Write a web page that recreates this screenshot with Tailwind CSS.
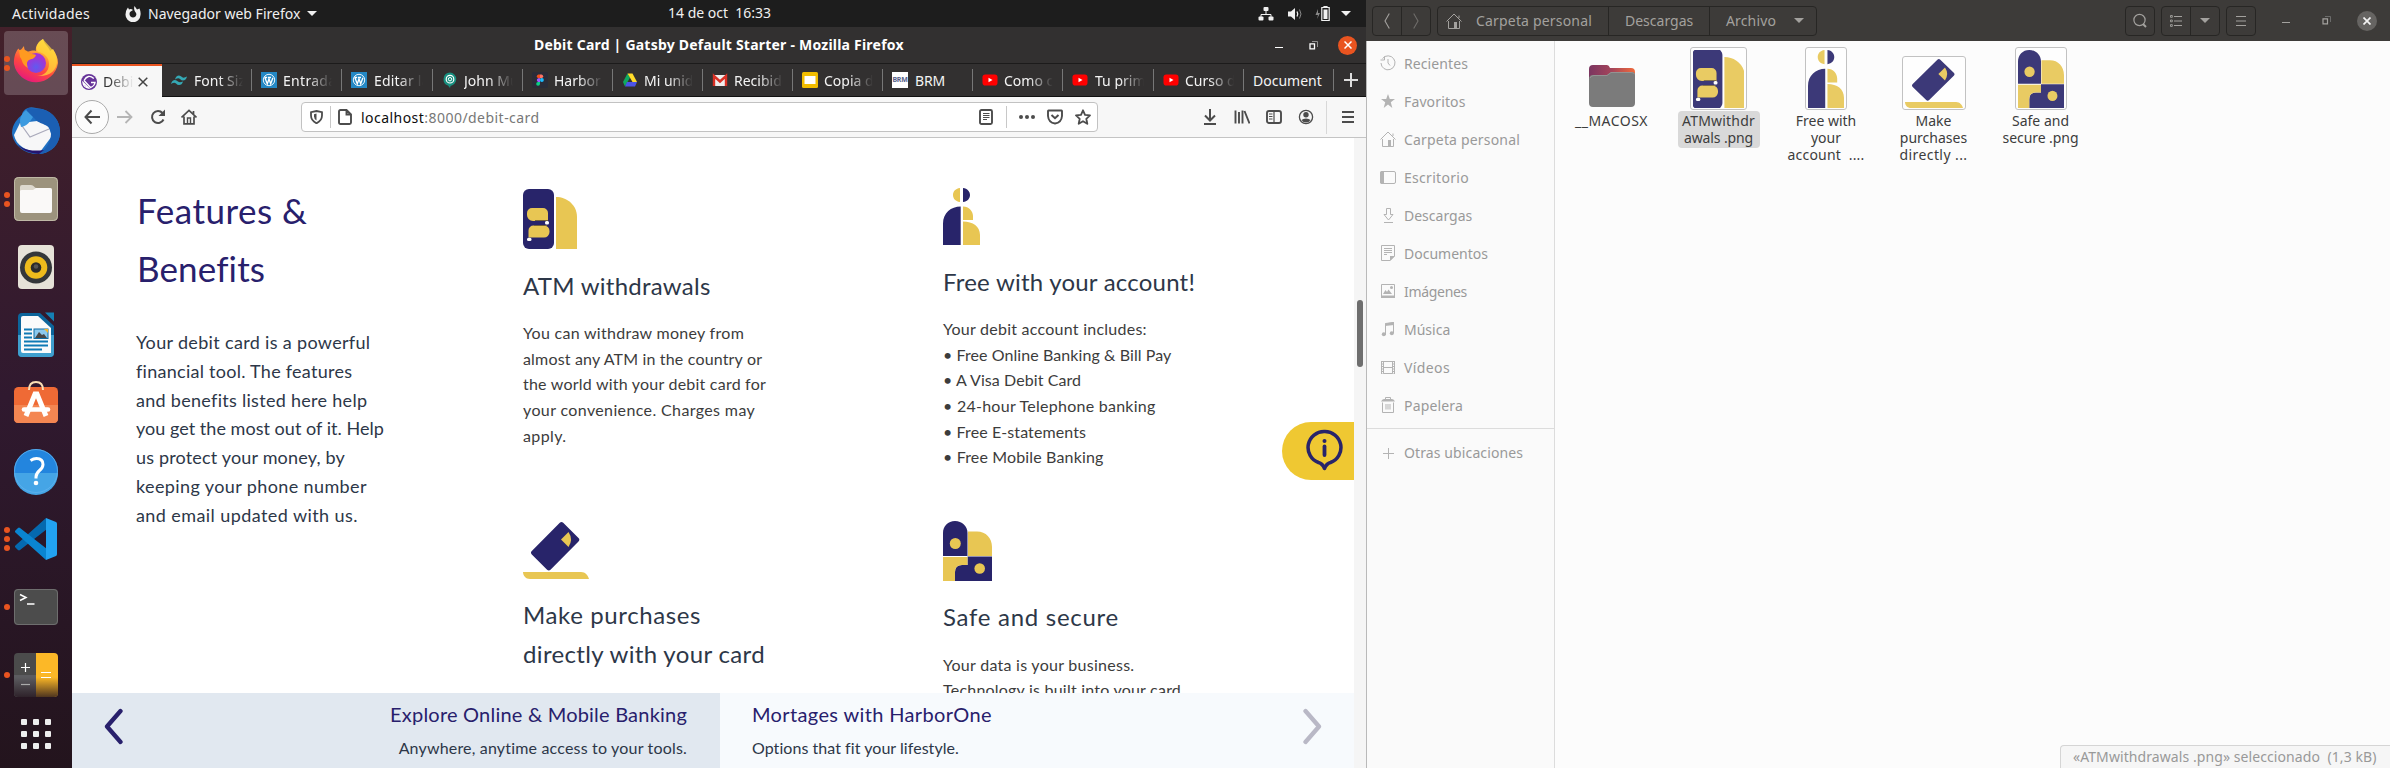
<!DOCTYPE html>
<html lang="es">
<head>
<meta charset="utf-8">
<title>Debit Card</title>
<script src="https://cdn.jsdelivr.net/npm/@tailwindcss/browser@4"></script>
</head>
<body class="bg-white">
<!-- Shared artwork for page features and file thumbnails -->
<svg width="0" height="0" class="absolute">
  <symbol id="atm" viewBox="0 0 54 60" preserveAspectRatio="none"><rect width="31" height="60" rx="6" fill="#28246a"/><path d="M33 8C44 8 54 16 54 28V60H33Z" fill="#e8c653"/><path d="M9 19h11a5 5 0 0 1 5 5v8H10a6 6 0 0 1-6-6v-2a5 5 0 0 1 5-5ZM10.500 36.500H21a5.500 5.500 0 0 1 5.500 5.500v1a5.500 5.500 0 0 1-5.500 5.500H5.500v-7a5 5 0 0 1 5-5Z" fill="#e8c653"/><path d="M12 31.500h13M11 36.500h13" stroke="#746238" stroke-width="1.200"/><rect x="22" y="32" width="4" height="3.400" rx="1.500" fill="#fff"/><rect x="4" y="48.700" width="4.500" height="3.300" rx="1.500" fill="#fff"/></symbol>
  <symbol id="person" viewBox="0 0 37 57" preserveAspectRatio="none"><path d="M17 0v14C12 13.500 10 10 10 7s2-6.500 7-7ZM20 18.500c6 0 10 5 10 9.500v4H20ZM20 33.500c10 0 17 5 17 13.500v10H20Z" fill="#e8c653"/><path d="M20 0c4.500.5 7 3.500 7 7s-2.500 6.500-7 7ZM17.700 18.500V57H0V35.500C0 25 8 18.500 17.700 18.500Z" fill="#28246a"/></symbol>
  <symbol id="card" viewBox="0 0 66 57" preserveAspectRatio="none"><path d="M36.800.8q1.700-1.600 3.400 0L55.500 16q1.700 1.700 0 3.400L27.500 47.700q-1.700 1.600-3.400 0L8.800 32.500q-1.700-1.700 0-3.400Z" fill="#28246a"/><path d="m45.500 10-7.500 7.500 7.500 7.500q5-7.500 0-15Z" fill="#e8c653"/><path d="M0 50h58c4.500 0 7 3.500 8 7H7c-4.500 0-7-3.500-7-7Z" fill="#e8c653"/></symbol>
  <symbol id="safe" viewBox="0 0 49 60" preserveAspectRatio="none"><path d="M0 35V12C0 5 5 0 12 0s12.500 5 12.500 12v23ZM24.500 35.500H49V60H12V51q0-7 7-7h5.500Z" fill="#28246a"/><path d="M25 10.500h9C43 10.500 49 17 49 26v9H25ZM0 36h24.500v8H19q-7 0-7 7v9H0Z" fill="#e8c653"/><circle cx="12.300" cy="22.500" r="5.500" fill="#e8c653"/><circle cx="36.700" cy="47.500" r="5.300" fill="#e8c653"/></symbol>
  <symbol id="home" viewBox="0 0 16 16"><path d="M.5 8.500 8 1l7.500 7.500M2.500 8v7.500h11V8M13 5V2.500" fill="none" stroke="currentColor"/><rect x="8" y="9" width="3" height="6.500" fill="currentColor"/></symbol>
  <symbol id="wp" viewBox="0 0 16 16"><rect width="16" height="16" fill="#2488c4"/><circle cx="8" cy="8" r="5.700" fill="none" stroke="#fff" stroke-width=".9"/><path d="m3.800 5.500 2.500 6.300L8 7l1.700 4.800 2.200-6M3.400 5.500h2.800M7 5.500h3" fill="none" stroke="#fff" stroke-width="1.300"/></symbol>
  <symbol id="yt" viewBox="0 0 16 16"><rect x=".5" y="2.500" width="15" height="11" rx="2.800" fill="#f00"/><path d="M6.500 5.700v4.600L10.500 8Z" fill="#fff"/></symbol>
</svg>

<div class="flex w-[2390px] h-[768px] overflow-hidden text-[14px] leading-[17px] font-['Noto_Sans',sans-serif] whitespace-nowrap">

<!-- Left monitor -->
<div class="w-[1366px] h-full flex flex-col">
  <header class="h-[27px] bg-[#1d1d1d] text-[#f0f0f0] flex items-center relative shrink-0">
    <span class="pl-3 w-[125px] tracking-[.3px]">Actividades</span>
    <svg class="w-4 h-4" viewBox="0 0 16 16"><path d="M9.500 0 12 3.500 14.500 2.500Q16 6 15.500 9A7.500 7.500 0 0 1 .5 8.500Q.5 5 2 3L3 1.500 4 3.500Q6 2.500 8 4L5 6Q3.800 8.500 5.500 10.500 8 12.500 10.500 10.500 12.500 8 10 5.500 8.500 3 9.500 0Z" fill="#f0f0f0"/></svg>
    <span class="ml-[7px] w-[159px]">Navegador web Firefox</span>
    <span class="border-x-[5px] border-x-transparent border-t-[5px] border-t-[#f0f0f0]"></span>
    <span class="absolute left-[668px] top-[4px] whitespace-pre">14 de oct  16:33</span>
    <div class="ml-auto pr-[15px] flex items-center text-[#f0f0f0]">
      <svg class="w-4 h-4 mr-[13px]" viewBox="0 0 16 16"><path d="M8 5v4M3 12V8.500h10V12" fill="none" stroke="currentColor"/><rect x="5.500" y="1" width="5" height="4" rx="1" fill="currentColor"/><rect x=".5" y="10.500" width="5" height="4" rx="1" fill="currentColor"/><rect x="10.500" y="10.500" width="5" height="4" rx="1" fill="currentColor"/></svg>
      <svg class="w-4 h-4 mr-[12px]" viewBox="0 0 16 16"><path d="M1 5.500h3L8 2v12L4 10.500H1Z" fill="currentColor"/><path d="M10 5.500q1.500 2.500 0 5" fill="none" stroke="currentColor" stroke-width="1.300"/><path d="M12.500 3.500q3 4.500 0 9" fill="none" stroke="#888"/></svg>
      <svg class="w-4 h-4 mr-[10px]" viewBox="0 0 16 16"><path d="m3 3-2.500 6H3L2 13l3-6H3Z" fill="#888"/><path d="M9 1.500V.5h3v1M6.800 1.500h7.400v13H6.800Z" fill="none" stroke="currentColor" stroke-width="1.200"/><rect x="8.500" y="3.500" width="4" height="9.500" fill="currentColor"/></svg>
      <span class="border-x-[5px] border-x-transparent border-t-[5px] border-t-[#f0f0f0]"></span>
    </div>
  </header>

  <div class="flex flex-1 min-h-0">
    <!-- Dock -->
    <nav class="w-[72px] shrink-0 pt-[2px] bg-linear-to-b from-[#43202a] via-[#30192f] to-[#23141d] text-[#e95420]">
      <div class="relative h-[68px] flex items-center justify-center">
        <div class="absolute left-1 top-[2px] size-16 rounded bg-white/20"></div>
        <div class="absolute left-[4px] flex flex-col gap-[3px]"><i class="size-[6px] rounded-full bg-current"></i><i class="size-[6px] rounded-full bg-current"></i></div>
        <svg class="relative w-12 h-12" viewBox="0 0 48 48"><defs><linearGradient id="ff" x1=".8" y1="0" x2=".3" y2="1"><stop offset="0" stop-color="#fff44f"/><stop offset=".35" stop-color="#ffa436"/><stop offset=".65" stop-color="#ff4a3d"/><stop offset="1" stop-color="#e5177f"/></linearGradient><radialGradient id="fg" cx=".5" cy=".7"><stop offset="0" stop-color="#5f5bf0"/><stop offset="1" stop-color="#a234d6"/></radialGradient></defs><path d="M31 0c1 5 6 8 7 12l3-2c3 5 5 9 5 14A22.300 22.300 0 0 1 2 25C1.500 18 4 12 6.500 9.500L8 12l4-5c0 3 1 4 2.500 6C18 12 22 11 24 12c-1-5 3-10 7-12Z" fill="url(#ff)"/><path d="M31 0c-6 4-8 9-5 13 7 1 11 6 11 12 0 8-6 12-12 12 12 1 20-5 20-15 0-10-9-15-14-22Z" fill="#ffd53a" opacity=".75"/><circle cx="24" cy="24" r="10" fill="url(#fg)"/><path d="M7 11c4-1 9 0 11 4 2 0 5 0 6 1-1 4-5 4-7 5-3 2-2 5-1 8C9 25 11 21 8 18Z" fill="#ff9a20"/></svg>
      </div>
      <div class="relative h-[68px] flex items-center justify-center">
        <svg class="w-12 h-12" viewBox="0 0 48 48"><path d="M16 1c3-2 8 0 14 1 12 3 18 13 18 23 0 12-9 21-20 22C13 48 1 38 0 26 0 17 6 11 10 8c0-3 3-6 6-7Z" fill="#2072c4"/><path d="M8 16 34 13l6 16-12 16C14 45 4 38 2 28Z" fill="#f7f7f8"/><path d="m8 16 10 14 19-8" fill="none" stroke="#aab" stroke-width="1.200"/><path d="M16 1c-2 3-5 7-2 9 3-2 7-1 9 2 4 6 16 4 16 15 0 8-6 16-12 20 13-1 21-10 21-22C48 15 42 5 30 2Z" fill="#1b5fb3"/><path d="M14 3c-8 7-6 12-5 17 6-1 9-5 12-10Z" fill="#3d9be0"/><path d="M3 34c6 9 12 12 24 13l5-4C18 45 8 42 3 34Z" fill="#251570"/></svg>
      </div>
      <div class="relative h-[68px] flex items-center justify-center">
        <div class="absolute left-[4px] flex flex-col gap-[3px]"><i class="size-[6px] rounded-full bg-current"></i><i class="size-[6px] rounded-full bg-current"></i></div>
        <svg class="w-12 h-12" viewBox="0 0 48 48"><rect x="2" y="2" width="44" height="44" rx="4.500" fill="#9c937d"/><rect x="2.500" y="2.500" width="43" height="43" rx="4" fill="none" stroke="#bfb9a6"/><path d="M8 12q0-2 2-2h9q2 0 3 1.500t3 1.500H38q2 0 2 2v6H8Z" fill="#ddd9ce"/><path d="M8 16q0-1 2-1h11l3-2h14q2 0 2 2v21q0 2-2 2H10q-2 0-2-2Z" fill="#faf9f8"/></svg>
      </div>
      <div class="relative h-[68px] flex items-center justify-center">
        <svg class="w-12 h-12" viewBox="0 0 48 48"><rect x="6" y="2" width="36" height="44" rx="4" fill="#e6e2d8"/><circle cx="24" cy="24.500" r="16" fill="#34373a"/><circle cx="24" cy="24.500" r="11.300" fill="#edbb1c"/><circle cx="24" cy="24.500" r="5.300" fill="#2b2b2b"/><circle cx="24" cy="23.500" r="2.300" fill="#555"/></svg>
      </div>
      <div class="relative h-[68px] flex items-center justify-center">
        <svg class="w-12 h-12" viewBox="0 0 48 48"><path d="M10 2h18l14 13v27q0 4-4 4H10q-4 0-4-4V6q0-4 4-4Z" fill="#0c659b"/><path d="M6 24h36v18q0 4-4 4H10q-4 0-4-4Z" fill="#3f9fce"/><path d="M33 1.500h9v9Z" fill="#1580b4"/><path d="M11 5h15l13 12v25H11q-2 0-2-2V7q0-2 2-2Z" fill="#fbfbfb"/><path d="M12 18.500h8M12 22.500h8M12 26.500h8M12 30.500h24M12 34.500h24M12 38.500h18" stroke="#0f7ab5" stroke-width="1.800"/><rect x="22" y="18" width="14" height="9.500" fill="#8cc9ee" stroke="#0f6da3"/><path d="m23 27 4-6 3 3 2-1 3 4Z" fill="#474747"/><path d="M32 18h4v4Z" fill="#f3b72b"/></svg>
      </div>
      <div class="relative h-[68px] flex items-center justify-center">
        <svg class="w-12 h-12" viewBox="0 0 48 48"><rect x="2" y="8" width="44" height="36" rx="4.500" fill="#ef6a35"/><path d="M2 26h44v13.500q0 4.500-4.500 4.500H6.500Q2 44 2 39.500Z" fill="#f48652"/><path d="M17 11q0-8 7-8t7 8" fill="none" stroke="#fadfb5" stroke-width="2"/><path d="m14 37 9-22h2l9 22" fill="none" stroke="#fff" stroke-width="5"/><path d="M12 30.500h24" stroke="#fff" stroke-width="4.600" stroke-linecap="round"/></svg>
      </div>
      <div class="relative h-[68px] flex items-center justify-center">
        <svg class="w-12 h-12" viewBox="0 0 48 48"><circle cx="24" cy="24" r="22" fill="#2385de"/><path d="M2 26a22 22 0 0 0 44 0Z" fill="#45a5e6"/><circle cx="24" cy="24" r="21.500" fill="none" stroke="#61b3ee" stroke-width=".8"/><path d="M18.500 13.500q3-2 6-2 6.500 0 6.500 6 0 3-3.500 6T24 30v1.500" fill="none" stroke="#fff" stroke-width="3"/><circle cx="24" cy="36" r="2.300" fill="#fff"/></svg>
      </div>
      <div class="relative h-[68px] flex items-center justify-center">
        <div class="absolute left-[4px] flex flex-col gap-[3px]"><i class="size-[6px] rounded-full bg-current"></i><i class="size-[6px] rounded-full bg-current"></i><i class="size-[6px] rounded-full bg-current"></i></div>
        <svg class="w-12 h-12" viewBox="0 0 48 48"><path d="m34 3 1 11L8 35q-1 .8-2 0l-2.600-2.400q-1-1 0-2Z" fill="#0569af"/><path d="m34 45 1-11L8 13q-1-.8-2 0l-2.600 2.400q-1 1 0 2Z" fill="#0a85d1"/><path d="m34 3 10 4q1 .5 1 2v30q0 1.500-1 2l-10 4Z" fill="#22a3f1"/></svg>
      </div>
      <div class="relative h-[68px] flex items-center justify-center">
        <i class="absolute left-[4px] size-[6px] rounded-full bg-current"></i>
        <svg class="w-12 h-12" viewBox="0 0 48 48"><rect x="2" y="6" width="44" height="36" rx="4" fill="#4c4c4c"/><rect x="2.500" y="6.500" width="43" height="35" rx="3.500" fill="none" stroke="#6e6e6e"/><path d="m8 11.500 6 3-6 3M15 21h7.500" fill="none" stroke="#fff" stroke-width="1.500"/></svg>
      </div>
      <div class="relative h-[68px] flex items-center justify-center">
        <i class="absolute left-[4px] size-[6px] rounded-full bg-current"></i>
        <svg class="w-12 h-12" viewBox="0 0 48 48"><defs><linearGradient id="cg" x2="0" y2="1"><stop offset=".55" stop-color="#23141d" stop-opacity="0"/><stop offset="1" stop-color="#23141d" stop-opacity=".8"/></linearGradient></defs><path d="M24 2v44H6q-4 0-4-4V6q0-4 4-4Z" fill="#4b4b4b"/><path d="M2 24h22v22H6q-4 0-4-4Z" fill="#5c5c60"/><path d="M24 2h18q4 0 4 4v36q0 4-4 4H24Z" fill="#fcb827"/><rect x="2" y="2" width="44" height="44" rx="4" fill="url(#cg)"/><path d="M13.500 12v9M9 16.500h9M29 21.500h10M29 26.500h10" stroke="#fff" stroke-width="1.200"/><path d="M9 33.500h9" stroke="#aaa" stroke-width="1.200"/></svg>
      </div>
      <div class="grid grid-cols-3 gap-[6px] w-[30px] mx-auto mt-[10px]">
        <i class="size-[6px] rounded-[1px] bg-[#eee]"></i><i class="size-[6px] rounded-[1px] bg-[#eee]"></i><i class="size-[6px] rounded-[1px] bg-[#eee]"></i>
        <i class="size-[6px] rounded-[1px] bg-[#eee]"></i><i class="size-[6px] rounded-[1px] bg-[#eee]"></i><i class="size-[6px] rounded-[1px] bg-[#eee]"></i>
        <i class="size-[6px] rounded-[1px] bg-[#eee]"></i><i class="size-[6px] rounded-[1px] bg-[#eee]"></i><i class="size-[6px] rounded-[1px] bg-[#eee]"></i>
      </div>
    </nav>

    <!-- Browser window -->
    <div class="flex-1 min-w-0 flex flex-col">
      <div class="h-[37px] bg-[#323030] border-b border-[#1c1b1b] text-white relative flex items-center justify-end pr-[9px] shrink-0">
        <b class="absolute left-[462px] top-[9px] tracking-[.22px]">Debit Card | Gatsby Default Starter - Mozilla Firefox</b>
        <i class="w-2 h-px bg-white mr-[26px] mt-1"></i>
        <svg class="w-[9px] h-[9px] mr-[20px]" viewBox="0 0 9 9"><path d="M1 2.800h4.500v5H1Z" fill="none" stroke="#fff" stroke-width="1.300"/><path d="M3 .5h5.500V6" fill="none" stroke="#aaa" stroke-width=".8"/></svg>
        <span class="size-[19px] rounded-full bg-[#e95420] flex items-center justify-center"><svg class="w-2 h-2" viewBox="0 0 8 8"><path d="m.5.5 7 7m0-7-7 7" stroke="#fff" stroke-width="1.500"/></svg></span>
      </div>

      <!-- Tab strip -->
      <div class="h-[33px] shrink-0 bg-[#323030] border-b border-[#111] flex text-[#f4f4f4]">
        <div class="w-[90px] shrink-0 h-[33px] bg-[#f7f7f7] border-t-2 border-[#e95420] mt-0 flex items-center pl-[9px] text-[#333]">
          <svg class="w-4 h-4" viewBox="0 0 16 16"><circle cx="8" cy="8" r="8" fill="#663399"/><path d="M2 8.500 7.500 14A6 6 0 0 1 2 8.500ZM3 6.500 9.500 13.500Q13.500 12 14 8.500H10M3 6.500Q7-.5 12.800 4.500" fill="none" stroke="#fff" stroke-width="1.400"/></svg>
          <span class="ml-[6px] w-[31px] overflow-hidden [mask-image:linear-gradient(to_right,black_20%,transparent)]">Debit</span>
          <svg class="ml-1 w-[10px] h-[10px]" viewBox="0 0 10 10"><path d="m.7.7 8.600 8.600m0-8.600L.7 9.300" stroke="#444" stroke-width="1.500"/></svg>
        </div>
        <div class="w-[90px] shrink-0 my-[5px] border-r border-[#777] flex items-center pl-[9px] gap-[7px]"><svg class="w-4 h-4" viewBox="0 0 16 16"><path d="M4 7.500q1-4 4-4 1.500 0 3 1.500t5-.5q-1 4-4 4-1.500 0-3-1.500T4 7.500ZM0 12q1-4 4-4 1.500 0 3 1.500T12 9.500q-1 3.500-4 3.500-1.500 0-3-1.500T0 12Z" fill="#35a9b5"/></svg><span class="w-[49px] overflow-hidden [mask-image:linear-gradient(to_right,black_50%,transparent)]">Font Size</span></div>
        <div class="w-[90px] shrink-0 my-[5px] border-r border-[#777] flex items-center pl-[9px] gap-[6px]"><svg class="w-4 h-4"><use href="#wp"/></svg><span class="w-[49px] overflow-hidden tracking-[.3px] [mask-image:linear-gradient(to_right,black_50%,transparent)]">Entradas</span></div>
        <div class="w-[91px] shrink-0 my-[5px] border-r border-[#777] flex items-center pl-[9px] gap-[7px]"><svg class="w-4 h-4"><use href="#wp"/></svg><span class="w-[49px] overflow-hidden tracking-[.2px] [mask-image:linear-gradient(to_right,black_50%,transparent)]">Editar la</span></div>
        <div class="w-[90px] shrink-0 my-[5px] border-r border-[#777] flex items-center pl-[9px] gap-[6px]"><svg class="w-4 h-4" viewBox="0 0 16 16"><path d="M8 .5A6.800 6.800 0 0 1 8.500 14L8 16 6 13.500A6.700 6.700 0 0 1 8 .5Z" fill="#188f7f"/><circle cx="8" cy="7.200" r="3.800" fill="none" stroke="#fff" stroke-width="1.200"/><circle cx="8" cy="7.200" r="1.700" fill="none" stroke="#fff"/></svg><span class="w-[49px] overflow-hidden [mask-image:linear-gradient(to_right,black_50%,transparent)]">John Mu</span></div>
        <div class="w-[90px] shrink-0 my-[5px] border-r border-[#777] flex items-center pl-[9px] gap-[6px]"><svg class="w-4 h-4" viewBox="0 0 16 16"><rect width="16" height="16" rx="2" fill="#2a2c38"/><path d="M8 2.500H6.300a1.900 1.900 0 0 0 0 3.700H8Z" fill="#f24e1e"/><path d="M8 2.500h1.700a1.900 1.900 0 0 1 0 3.700H8Z" fill="#ff7262"/><path d="M8 6.200H6.300a1.900 1.900 0 0 0 0 3.700H8Z" fill="#a259ff"/><circle cx="9.900" cy="8" r="1.900" fill="#1abcfe"/><path d="M8 9.900H6.300A1.900 1.900 0 1 0 8 11.800Z" fill="#0acf83"/></svg><span class="w-[49px] overflow-hidden [mask-image:linear-gradient(to_right,black_50%,transparent)]">Harbor</span></div>
        <div class="w-[90px] shrink-0 my-[5px] border-r border-[#777] flex items-center pl-[9px] gap-[6px]"><svg class="w-4 h-4" viewBox="0 0 16 16"><path d="M5.500 1.500 1 10l2 4.500L8 5.500Z" fill="#0fa960"/><path d="M5.500 1.500h5L15 10h-4.500Z" fill="#ffdc2a"/><path d="M5 10h10l-2 4.500H3Z" fill="#4c54e8"/></svg><span class="w-[49px] overflow-hidden [mask-image:linear-gradient(to_right,black_50%,transparent)]">Mi unida</span></div>
        <div class="w-[90px] shrink-0 my-[5px] border-r border-[#777] flex items-center pl-[9px] gap-[6px]"><svg class="w-4 h-4" viewBox="0 0 16 16"><rect x="1" y="3" width="14" height="11" fill="#eee"/><path d="M2 14V4l6 5.500L14 4v10" fill="none" stroke="#d93025" stroke-width="2.400"/></svg><span class="w-[49px] overflow-hidden [mask-image:linear-gradient(to_right,black_50%,transparent)]">Recibidos</span></div>
        <div class="w-[90px] shrink-0 my-[5px] border-r border-[#777] flex items-center pl-[9px] gap-[6px]"><svg class="w-4 h-4" viewBox="0 0 16 16"><rect width="16" height="16" rx="1.500" fill="#f2bd00"/><rect x="2.500" y="4" width="11" height="8" fill="#fff"/></svg><span class="w-[49px] overflow-hidden [mask-image:linear-gradient(to_right,black_50%,transparent)]">Copia de</span></div>
        <div class="w-[90px] shrink-0 my-[5px] border-r border-[#777] flex items-center pl-[9px] gap-[7px]"><span class="w-4 h-4 bg-white text-[#55608a] text-[7px] leading-4 font-bold text-center tracking-[-.3px]">BRM</span><span class="tracking-[-.17px]">BRM</span></div>
        <div class="w-[90px] shrink-0 my-[5px] border-r border-[#777] flex items-center pl-[9px] gap-[6px]"><svg class="w-4 h-4"><use href="#yt"/></svg><span class="w-[49px] overflow-hidden [mask-image:linear-gradient(to_right,black_50%,transparent)]">Como cr</span></div>
        <div class="w-[91px] shrink-0 my-[5px] border-r border-[#777] flex items-center pl-[9px] gap-[7px]"><svg class="w-4 h-4"><use href="#yt"/></svg><span class="w-[49px] overflow-hidden [mask-image:linear-gradient(to_right,black_50%,transparent)]">Tu prime</span></div>
        <div class="w-[90px] shrink-0 my-[5px] border-r border-[#777] flex items-center pl-[9px] gap-[6px]"><svg class="w-4 h-4"><use href="#yt"/></svg><span class="w-[49px] overflow-hidden [mask-image:linear-gradient(to_right,black_50%,transparent)]">Curso de</span></div>
        <div class="w-[90px] shrink-0 my-[5px] border-r border-[#777] flex items-center pl-[9px]">Document</div>
        <svg class="ml-[10px] mt-[9px] w-[14px] h-[14px]" viewBox="0 0 14 14"><path d="M7 0v14M0 7h14" stroke="#ddd" stroke-width="2"/></svg>
      </div>

      <!-- Toolbar -->
      <div class="h-[41px] shrink-0 bg-[#f7f7f7] border-b border-[#c4c4c4] flex items-center pl-[3px] text-[#4c4c4c]">
        <span class="size-[34px] rounded-full border border-[#aaa] bg-[#fcfcfc] flex items-center justify-center shrink-0"><svg class="w-4 h-4" viewBox="0 0 16 16"><path d="M16 8H1.500M7.500 1.500 1.500 8l6 6.500" fill="none" stroke="currentColor" stroke-width="2"/></svg></span>
        <svg class="ml-2 w-4 h-4 text-[#b5b5b5] shrink-0" viewBox="0 0 16 16"><path d="M0 8h14.500M8.500 2l6 6-6 6" fill="none" stroke="currentColor" stroke-width="1.800"/></svg>
        <svg class="ml-[17px] w-4 h-4 shrink-0" viewBox="0 0 16 16"><path d="M13.500 10.500A6 6 0 1 1 12.500 4" fill="none" stroke="currentColor" stroke-width="2"/><path d="M15 .5V7H8.500Z" fill="currentColor"/></svg>
        <svg class="ml-[15px] w-4 h-4 shrink-0" viewBox="0 0 16 16"><path d="M.5 8.500 8 1.500l7.500 7M3 7.500v7.300h10V7.500M12.500 5V2" fill="none" stroke="currentColor" stroke-width="1.700"/><path d="M6.500 15V9h3v6" fill="none" stroke="currentColor" stroke-width="1.400"/></svg>
        <div class="ml-[104px] w-[797px] h-[30px] bg-white border border-[#c2c2c2] rounded flex items-center pl-[8px] shrink-0">
          <svg class="w-[13px] h-[14px]" viewBox="0 0 13 14"><path d="M6.500 1 12 2.200v3.300q0 5-5.500 7.800Q1 10.500 1 5.500V2.200Z" fill="none" stroke="currentColor" stroke-width="1.800"/><path d="M6.500 3.500 4 4.200v2q0 3 2.500 4.300Z" fill="currentColor"/></svg>
          <i class="ml-[7px] w-px h-[22px] bg-[#c8c8c8]"></i>
          <svg class="ml-[7px] w-[14px] h-4" viewBox="0 0 14 16"><path d="M2.500 1h6L13 5.500v8q0 1.500-1.500 1.500h-9Q1 15 1 13.500v-11Q1 1 2.500 1ZM8.500 1v4.500H13" fill="none" stroke="currentColor" stroke-width="1.900"/></svg>
          <span class="ml-[9px] tracking-[.46px] text-[#777]"><span class="text-[#0c0c0d]">localhost</span>:8000/debit-card</span>
          <svg class="ml-auto w-[14px] h-4" viewBox="0 0 14 16"><rect x="1" y="1" width="12" height="14" rx="1.500" fill="none" stroke="currentColor" stroke-width="1.900"/><path d="M4 4.500h6.500M4 6.500h6.500M4 8.500h6.500M4 10.500h4" stroke="currentColor"/></svg>
          <i class="ml-[13px] w-px h-[22px] bg-[#c8c8c8]"></i>
          <svg class="ml-[12px] w-4 h-4" viewBox="0 0 16 16"><circle cx="2" cy="8" r="2" fill="currentColor"/><circle cx="8" cy="8" r="2" fill="currentColor"/><circle cx="14" cy="8" r="2" fill="currentColor"/></svg>
          <svg class="ml-[12px] w-4 h-4" viewBox="0 0 16 16"><path d="M1.500 1.500h13q.5 0 .5.800V7Q14.500 13.500 8 14.500 1.500 13.500 1 7V2.300q0-.8.500-.8Z" fill="none" stroke="currentColor" stroke-width="1.900"/><path d="M4.500 6 8 9.200 11.500 6" fill="none" stroke="currentColor" stroke-width="2"/></svg>
          <svg class="ml-[12px] mr-[6px] w-4 h-4" viewBox="0 0 16 16"><path d="m8 1.300 2 4.600 5 .5-3.700 3.400 1 5L8 12.200l-4.300 2.600 1-5L1 6.400l5-.5Z" fill="none" stroke="currentColor" stroke-width="1.800" stroke-linejoin="round"/></svg>
        </div>
        <svg class="ml-[104px] w-4 h-4" viewBox="0 0 16 16"><path d="M8 0v11M3 6.500l5 5 5-5M2 15h12" fill="none" stroke="currentColor" stroke-width="2"/></svg>
        <svg class="ml-4 w-4 h-4" viewBox="0 0 16 16"><path d="M1.500 1.500v13M5 3v11.500M8.500 1.500v13M10.500 2l5 12.500" fill="none" stroke="currentColor" stroke-width="1.900"/></svg>
        <svg class="ml-4 w-4 h-4" viewBox="0 0 16 16"><rect x="1" y="2" width="14" height="12" rx="2" fill="none" stroke="currentColor" stroke-width="1.900"/><path d="M8 2v12M3 5h3.500M3 7.500h3.500M3 10h3.500" stroke="currentColor" stroke-width="1.200"/></svg>
        <svg class="ml-4 w-4 h-4" viewBox="0 0 16 16"><circle cx="8" cy="8" r="6.600" fill="none" stroke="currentColor" stroke-width="1.300"/><circle cx="8" cy="5.800" r="2.700" fill="currentColor"/><path d="M3.500 11q1.500-1.500 4.500-1.500t4.500 1.500Q11 13.500 8 13.500T3.500 11Z" fill="currentColor"/></svg>
        <i class="ml-3 w-px h-[33px] bg-[#d8d8d8]"></i>
        <svg class="ml-[15px] w-3 h-3" viewBox="0 0 12 12"><path d="M0 1h12M0 6h12M0 11h12" stroke="currentColor" stroke-width="1.900"/></svg>
      </div>

      <!-- Web page -->
      <div class="flex-1 min-h-0 flex">
        <main class="relative w-[1282px] overflow-hidden bg-white font-['Lato',sans-serif] text-[#2d3748] flex pl-[64px]">
          <section class="w-[387px] shrink-0 pt-[43px] text-[18px] leading-[28.8px]">
            <h1 class="text-[35px] leading-[58px] text-[#28206c] pl-[1px]"><span class="block tracking-[.5px]">Features &amp;</span><span class="block tracking-[.13px]">Benefits</span></h1>
            <p class="mt-[31px]">
              <span class="block tracking-[.33px]">Your debit card is a powerful</span>
              <span class="block tracking-[.27px]">financial tool. The features</span>
              <span class="block tracking-[.29px]">and benefits listed here help</span>
              <span class="block tracking-[.03px]">you get the most out of it. Help</span>
              <span class="block tracking-[.17px]">us protect your money, by</span>
              <span class="block tracking-[.39px]">keeping your phone number</span>
              <span class="block tracking-[.42px]">and email updated with us.</span>
            </p>
          </section>
          <section class="w-[420px] shrink-0 pt-[51px] text-[16px] leading-[25.6px]">
            <svg class="block w-[54px] h-[60px]"><use href="#atm"/></svg>
            <h2 class="mt-[17.5px] text-[24px] leading-[38.4px] tracking-[.25px]">ATM withdrawals</h2>
            <p class="mt-[15.4px] text-[#3c3c3c]">
              <span class="block tracking-[.29px]">You can withdraw money from</span>
              <span class="block tracking-[.17px]">almost any ATM in the country or</span>
              <span class="block tracking-[.22px]">the world with your debit card for</span>
              <span class="block tracking-[.37px]">your convenience. Charges may</span>
              <span class="block tracking-[.39px]">apply.</span>
            </p>
            <svg class="block mt-[73.7px] w-[66px] h-[57px]"><use href="#card"/></svg>
            <h2 class="mt-[17.5px] text-[24px] leading-[38.4px]"><span class="block tracking-[.61px]">Make purchases</span><span class="block tracking-[.35px]">directly with your card</span></h2>
          </section>
          <section class="w-[330px] shrink-0 pt-[50px] text-[16px] leading-[25.6px]">
            <svg class="block w-[37px] h-[57px]"><use href="#person"/></svg>
            <h2 class="mt-[17.5px] text-[24px] leading-[38.4px] tracking-[.22px]">Free with your account!</h2>
            <div class="mt-[15.4px] text-[#3c3c3c]">
              <p class="tracking-[.25px]">Your debit account includes:</p>
              <p class="tracking-[.08px]">• Free Online Banking &amp; Bill Pay</p>
              <p class="tracking-[.08px]">• A Visa Debit Card</p>
              <p class="tracking-[.26px]">• 24-hour Telephone banking</p>
              <p class="tracking-[.1px]">• Free E-statements</p>
              <p class="tracking-[.15px]">• Free Mobile Banking</p>
            </div>
            <svg class="block mt-[51px] w-[49px] h-[60px]"><use href="#safe"/></svg>
            <h2 class="mt-[17px] text-[24px] leading-[38.4px] tracking-[.72px]">Safe and secure</h2>
            <p class="mt-[15.6px] text-[#3c3c3c]"><span class="block tracking-[.27px]">Your data is your business.</span><span class="block tracking-[.22px]">Technology is built into your card</span></p>
          </section>

          <!-- Info tab -->
          <div class="absolute right-0 top-[284px] w-[72px] h-[58px] rounded-l-full bg-[#efc832]">
            <svg class="absolute left-6 top-[7px] w-[37px] h-[43px]" viewBox="0 0 37 43"><path d="M18.500 2.500a16 16 0 0 1 6 31q-4 1-6 6-2-5-6-6a16 16 0 0 1 6-31Z" fill="none" stroke="#28246a" stroke-width="3.500" stroke-linejoin="round"/><circle cx="18.500" cy="12" r="2" fill="#28246a"/><path d="M18.500 17.500v8.500" stroke="#28246a" stroke-width="3.800" stroke-linecap="round"/></svg>
          </div>

          <!-- Carousel footer -->
          <div class="absolute inset-x-0 bottom-0 h-[75px] flex text-[16px] leading-[26px]">
            <div class="w-[648px] bg-[#e1e8f0] flex justify-between pl-[32px] pr-[33px]">
              <svg class="mt-[15px] w-[20px] h-[37px]" viewBox="0 0 20 37"><path d="M16.500 3 3 18.500 16.500 34" fill="none" stroke="#28206c" stroke-width="4.300" stroke-linecap="round" stroke-linejoin="round"/></svg>
              <div class="pt-[6px] text-right"><p class="text-[20px] leading-[30px] tracking-[.21px] text-[#28206c]">Explore Online &amp; Mobile Banking</p><p class="mt-[5.5px] tracking-[.18px]">Anywhere, anytime access to your tools.</p></div>
            </div>
            <div class="flex-1 bg-[#f7fafd] flex justify-between pl-[32px] pr-[32px]">
              <div class="pt-[6px]"><p class="text-[20px] leading-[30px] tracking-[.36px] text-[#28206c]">Mortages with HarborOne</p><p class="mt-[5.5px] tracking-[.05px]">Options that fit your lifestyle.</p></div>
              <svg class="mt-[15px] w-[20px] h-[37px]" viewBox="0 0 20 37"><path d="M3.500 3 17 18.500 3.500 34" fill="none" stroke="#b9b8c6" stroke-width="4.300" stroke-linecap="round" stroke-linejoin="round"/></svg>
            </div>
          </div>
        </main>
        <div class="w-3 bg-[#f5f5f5] pt-[162px] pl-[3px]"><div class="w-[6px] h-[67px] rounded-full bg-[#6e6e6e]"></div></div>
      </div>
    </div>
  </div>
</div>

<!-- File manager -->
<div class="w-[1024px] h-full flex flex-col relative bg-[#fcfcfc]">
  <header class="h-[41px] shrink-0 bg-[#3d3b39] text-[#a3a19e] flex items-center pl-[6px]">
    <div class="w-[59px] h-[30px] border border-[#272624] rounded flex">
      <span class="flex-1 border-r border-[#272624] flex items-center justify-center"><svg class="w-[6px] h-4" viewBox="0 0 6 16"><path d="M5.300.5 1 8l4.300 7.500" fill="none" stroke="currentColor" stroke-width="1.100"/></svg></span>
      <span class="flex-1 flex items-center justify-center"><svg class="w-[6px] h-4" viewBox="0 0 6 16"><path d="M.7.500 5 8 .7 15.500" fill="none" stroke="#6f6d6a" stroke-width="1.100"/></svg></span>
    </div>
    <div class="ml-[6px] w-[380px] h-[30px] border border-[#272624] rounded flex items-center">
      <svg class="ml-2 w-4 h-4"><use href="#home"/></svg>
      <span class="ml-[14px] w-[132px] tracking-[.18px]">Carpeta personal</span>
      <span class="h-full w-[102px] pl-4 border-x border-[#272624] flex items-center">Descargas</span>
      <span class="ml-4 tracking-[.14px]">Archivo</span>
      <span class="ml-[18px] border-x-[5px] border-x-transparent border-t-[5px] border-t-[#a3a19e]"></span>
    </div>
    <div class="ml-auto w-[30px] h-[30px] border border-[#272624] rounded flex items-center justify-center"><svg class="w-[14px] h-4" viewBox="0 0 14 16"><circle cx="6.500" cy="7" r="5.600" fill="none" stroke="currentColor" stroke-width="1.200"/><path d="m10 11 3 3" stroke="currentColor" stroke-width="2"/></svg></div>
    <div class="ml-[6px] w-[59px] h-[30px] border border-[#272624] rounded flex">
      <span class="flex-1 border-r border-[#272624] flex items-center justify-center"><svg class="w-3 h-3" viewBox="0 0 12 12"><path d="M4 1.500h8M4 6h8M4 10.500h8" stroke="currentColor"/><path d="M.5.5h1.800v1.800H.5ZM.5 5h1.800v1.800H.5ZM.5 9.600h1.800v1.800H.5Z" fill="none" stroke="currentColor" stroke-width=".9"/></svg></span>
      <span class="flex-1 flex items-center justify-center"><i class="border-x-[5px] border-x-transparent border-t-[5px] border-t-[#a3a19e]"></i></span>
    </div>
    <div class="ml-[6px] w-[30px] h-[30px] border border-[#272624] rounded flex items-center justify-center"><svg class="w-[10px] h-[10px]" viewBox="0 0 10 10"><path d="M0 .5h10M0 5h10M0 9.500h10" stroke="currentColor"/></svg></div>
    <i class="ml-[26px] mt-1 w-2 h-px bg-[#a3a19e]"></i>
    <svg class="ml-8 w-[9px] h-[9px]" viewBox="0 0 9 9"><path d="M1 2.800h4.500v5H1Z" fill="none" stroke="currentColor" stroke-width="1.200"/><path d="M3 .5h5.500V6" fill="none" stroke="#777" stroke-width=".8"/></svg>
    <span class="ml-[26px] mr-[13px] size-5 rounded-full bg-[#666462] flex items-center justify-center"><svg class="w-2 h-2" viewBox="0 0 8 8"><path d="m.5.5 7 7m0-7-7 7" stroke="#f3f3f3" stroke-width="1.700"/></svg></span>
  </header>
  <div class="flex-1 min-h-0 flex">
    <aside class="w-[189px] shrink-0 border-l border-r border-l-[#b9b9b9] border-r-[#dcdcdc] bg-[#fafafa] text-[#999] pt-[3px]">
      <div class="h-[38px] pl-[13px] flex items-center gap-2"><svg class="w-4 h-4 text-[#b3b3b3]" viewBox="0 0 16 16"><path d="M2.500 3.500A7 7 0 1 1 1 8M.5 5h4V1.500M8 4v4l2 2.500" fill="none" stroke="currentColor"/></svg><span class="tracking-[.1px]">Recientes</span></div>
      <div class="h-[38px] pl-[13px] flex items-center gap-2"><svg class="w-4 h-4 text-[#b3b3b3]" viewBox="0 0 16 16"><path d="m8 1 1.800 5H15l-4.200 3.200L12.300 15 8 11.500 3.700 15l1.500-5.800L1 6h5.200Z" fill="currentColor"/></svg><span class="tracking-[.13px]">Favoritos</span></div>
      <div class="h-[38px] pl-[13px] flex items-center gap-2"><svg class="w-4 h-4 text-[#b3b3b3]"><use href="#home"/></svg><span class="tracking-[.18px]">Carpeta personal</span></div>
      <div class="h-[38px] pl-[13px] flex items-center gap-2"><svg class="w-4 h-4 text-[#b3b3b3]" viewBox="0 0 16 16"><rect x=".5" y="2.500" width="15" height="12" rx="1.500" fill="none" stroke="currentColor"/><path d="M0 4q0-2 2-2h2v13H2q-2 0-2-2Z" fill="currentColor"/></svg><span class="tracking-[.3px]">Escritorio</span></div>
      <div class="h-[38px] pl-[13px] flex items-center gap-2"><svg class="w-4 h-4 text-[#b3b3b3]" viewBox="0 0 16 16"><path d="M6.500 1.500h4v6H13L8.500 13 4 7.500h2.500ZM4 15.500h9" fill="none" stroke="currentColor"/></svg><span>Descargas</span></div>
      <div class="h-[38px] pl-[13px] flex items-center gap-2"><svg class="w-4 h-4 text-[#b3b3b3]" viewBox="0 0 16 16"><path d="M1.500.5h13V11l-4.500 4.500H1.500ZM4 3.500h8M4 5.500h8M4 7.500h8M4 9.500h3" fill="none" stroke="currentColor"/><path d="M10 11h5l-5 5Z" fill="currentColor"/></svg><span>Documentos</span></div>
      <div class="h-[38px] pl-[13px] flex items-center gap-2"><svg class="w-4 h-4 text-[#b3b3b3]" viewBox="0 0 16 16"><path d="M1.500 1.500h13v12h-13Z" fill="none" stroke="currentColor"/><path d="M1 12.500h14V15H1ZM3 11l2.500-4L7 9l1.500-2.500L12 11Z" fill="currentColor"/><circle cx="11.500" cy="4.500" r="1.500" fill="currentColor"/></svg><span class="tracking-[-.31px]">Imágenes</span></div>
      <div class="h-[38px] pl-[13px] flex items-center gap-2"><svg class="w-4 h-4 text-[#b3b3b3]" viewBox="0 0 16 16"><path d="M5.500 14V2.500l8-1V12" fill="none" stroke="currentColor"/><path d="M5 2.500 14 1v3L5 5Z" fill="currentColor"/><circle cx="3.800" cy="13.200" r="2" fill="currentColor"/><circle cx="11.800" cy="12.200" r="2" fill="currentColor"/></svg><span>Música</span></div>
      <div class="h-[38px] pl-[13px] flex items-center gap-2"><svg class="w-4 h-4 text-[#b3b3b3]" viewBox="0 0 16 16"><path d="M3.500 2.500h9v12h-9ZM3.500 8.500h9" fill="none" stroke="currentColor"/><path d="M1.500 2v13M14.500 2v13" stroke="currentColor"/><path d="M3 2v13M13 2v13" stroke="currentColor" stroke-width="2" stroke-dasharray="1 1.500"/></svg><span class="tracking-[.38px]">Vídeos</span></div>
      <div class="h-[38px] pl-[13px] flex items-center gap-2"><svg class="w-4 h-4 text-[#b3b3b3]" viewBox="0 0 16 16"><path d="M2.500 5.500v10h11v-10M6 7v5.500M8 7v5.500M10 7v5.500M5.500 2V.5h5V2" fill="none" stroke="currentColor"/><path d="M1 4.500Q2 2 4 2h8q2 0 3 2.500Z" fill="currentColor"/></svg><span class="tracking-[.16px]">Papelera</span></div>
      <div class="h-[28px] mt-1 border-b-0"></div>
      <div class="-mt-[28px] border-t border-[#dcdcdc] pt-[4.5px]"><div class="h-[38px] pl-[13px] flex items-center gap-2"><svg class="w-4 h-4 text-[#b3b3b3]" viewBox="0 0 16 16"><path d="M8.500 3v11M3 8.500h11" stroke="currentColor"/></svg><span class="tracking-[.11px]">Otras ubicaciones</span></div></div>
    </aside>
    <div class="flex-1 flex items-start pl-[3px] pt-[6px] text-center text-[#3d3d3d]">
      <div class="w-[107px] flex flex-col items-center">
        <div class="h-[63px] flex items-end pb-[2px]"><svg class="w-[46px] h-[43px] block" viewBox="0 0 46 43"><defs><linearGradient id="fo"><stop stop-color="#7b3560"/><stop offset=".5" stop-color="#a5455a"/><stop offset="1" stop-color="#f16a3b"/></linearGradient></defs><path d="M4 0h14q2 0 3 3h21q4 0 4 4v12H0V4q0-4 4-4Z" fill="url(#fo)"/><path d="M4 10h14l4-3h21q3 0 3 3v28q0 4-4 4H4q-4 0-4-4V14q0-4 4-4Z" fill="#7b7b7b"/><path d="M1 13q1-2.500 4-2.500h13l4-3h20q3 0 4 2" fill="none" stroke="#999" stroke-width=".8"/></svg></div>
        <p class="mt-[2px] tracking-[.47px]">__MACOSX</p>
      </div>
      <div class="w-[107px] flex flex-col items-center">
        <div class="h-[63px] p-[2px] border border-[#bcbcbc] rounded-[3px] bg-white opacity-90"><svg class="block w-[51px] h-[58px]" viewBox="1 1 52 58" preserveAspectRatio="none"><use href="#atm" width="54" height="60"/></svg></div>
        <p class="mt-[1px] w-[82px] h-[37px] rounded bg-[#d9d9d9] pt-px"><span class="block tracking-[.2px]">ATMwithdr</span><span class="block tracking-[-.13px]">awals .png</span></p>
      </div>
      <div class="w-[108px] flex flex-col items-center">
        <div class="h-[63px] p-[2px] border border-[#bcbcbc] rounded-[3px] bg-white opacity-90"><svg class="block w-[36px] h-[58px]"><use href="#person"/></svg></div>
        <p class="mt-[2px]"><span class="block">Free with</span><span class="block">your</span><span class="block tracking-[.2px] whitespace-pre">account  ....</span></p>
      </div>
      <div class="w-[107px] flex flex-col items-center">
        <div class="mt-[9px] h-[54px] p-[2px] border border-[#bcbcbc] rounded-[3px] bg-white opacity-90"><svg class="block w-[58px] h-[49px]"><use href="#card"/></svg></div>
        <p class="mt-[2px]"><span class="block">Make</span><span class="block">purchases</span><span class="block tracking-[.41px]">directly ...</span></p>
      </div>
      <div class="w-[107px] flex flex-col items-center">
        <div class="h-[63px] p-[2px] border border-[#bcbcbc] rounded-[3px] bg-white opacity-90"><svg class="block w-[46px] h-[58px]"><use href="#safe"/></svg></div>
        <p class="mt-[2px]"><span class="block">Safe and</span><span class="block tracking-[-.06px]">secure .png</span></p>
      </div>
    </div>
  </div>
  <div class="absolute right-0 bottom-0 w-[330px] h-[23px] border-t border-l border-[#d5d5d5] rounded-tl bg-[#f6f6f6] text-[#999] pl-3 pt-[2px] tracking-[.08px] whitespace-pre">«ATMwithdrawals .png» seleccionado  (1,3 kB)</div>
</div>
</div>
</body>
</html>
